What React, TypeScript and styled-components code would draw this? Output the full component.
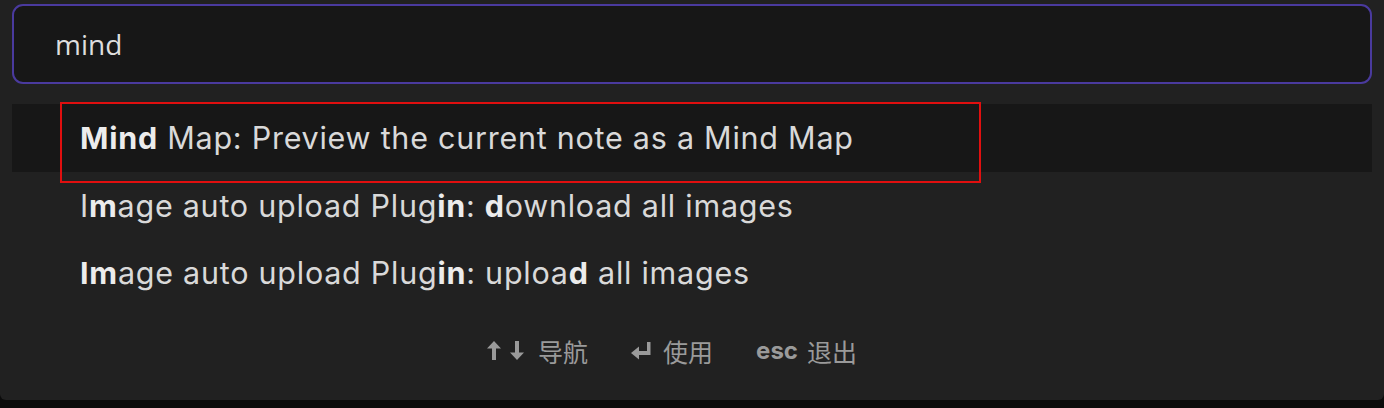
import React from "react";
import styled, { createGlobalStyle } from "styled-components";

const Global = createGlobalStyle`
  html, body { margin: 0; padding: 0; background: #0b0b0b; }
  body { font-family: Inter, "Noto Sans", sans-serif; }
`;

const Panel = styled.div`
  width: 1384px;
  height: 400px;
  box-sizing: border-box;
  background: #212121;
  border-radius: 0 0 6px 6px;
  padding: 4px 12px 0 12px;
  display: flex;
  flex-direction: column;
`;

const SearchBox = styled.div`
  height: 80px;
  box-sizing: border-box;
  border: 2px solid #4a3a9e;
  border-radius: 11px;
  background: #171717;
  display: flex;
  align-items: center;
  padding-left: 41px;
  font-family: "Open Sans", "Noto Sans", sans-serif;
  font-size: 28px;
  color: #dedede;
`;

const List = styled.div`
  margin-top: 20px;
  display: flex;
  flex-direction: column;
`;

const Row = styled.div<{ $selected?: boolean }>`
  position: relative;
  height: 67.5px;
  display: flex;
  align-items: center;
  padding-left: 68px;
  background: ${(p) => (p.$selected ? "#171717" : "transparent")};
  font-size: 30.5px;
  letter-spacing: 0.75px;
  color: #d9d9d9;
  white-space: pre;
`;

const Match = styled.b`
  font-weight: 700;
  color: #ececec;
`;

const Highlight = styled.div`
  position: absolute;
  left: 48px;
  top: -2px;
  width: 921px;
  height: 81px;
  box-sizing: border-box;
  border: 2px solid #e00f0f;
  pointer-events: none;
`;

const Footer = styled.div`
  margin-top: 26px;
  display: flex;
  justify-content: center;
  gap: 43px;
  padding-right: 40px;
  color: #9a9a9a;
  font-size: 26px;
  line-height: 36px;
`;

const Hint = styled.div<{ $gap: number }>`
  display: flex;
  align-items: center;
  gap: ${(p) => p.$gap}px;
`;

const Key = styled.span`
  font-family: Inter, sans-serif;
  font-weight: 700;
  font-size: 24px;
  display: flex;
  align-items: center;
  gap: 9px;
`;

const Label = styled.span`
  font-family: "Noto Sans CJK SC", sans-serif;
  font-size: 25px;
`;

const ArrowIcon = ({ dir }: { dir: "up" | "down" }) => (
  <svg width="14" height="19" viewBox="0 0 14 19" fill="#9a9a9a">
    {dir === "up" ? (
      <path d="M7 0L14 7.5H9V19H5V7.5H0Z" />
    ) : (
      <path d="M7 19L14 11.5H9V0H5V11.5H0Z" />
    )}
  </svg>
);

const ReturnIcon = () => (
  <svg width="20" height="19" viewBox="0 0 20 19" fill="#9a9a9a">
    <path d="M16 1h3.5v13H8v4.5L0 12l8-6.5V10h8Z" />
  </svg>
);

export default function App() {
  return (
    <>
      <Global />
      <Panel>
        <SearchBox>mind</SearchBox>
        <List>
          <Row $selected>
            <Match>Mind</Match> Map: Preview the current note as a Mind Map
            <Highlight />
          </Row>
          <Row>
            I<Match>m</Match>age auto upload Plug<Match>in</Match>: <Match>d</Match>ownload all images
          </Row>
          <Row>
            <Match>Im</Match>age auto upload Plug<Match>in</Match>: uploa<Match>d</Match> all images
          </Row>
        </List>
        <Footer>
          <Hint $gap={14}>
            <Key>
              <ArrowIcon dir="up" />
              <ArrowIcon dir="down" />
            </Key>
            <Label>导航</Label>
          </Hint>
          <Hint $gap={12}>
            <Key>
              <ReturnIcon />
            </Key>
            <Label>使用</Label>
          </Hint>
          <Hint $gap={9}>
            <Key>esc</Key>
            <Label>退出</Label>
          </Hint>
        </Footer>
      </Panel>
    </>
  );
}
